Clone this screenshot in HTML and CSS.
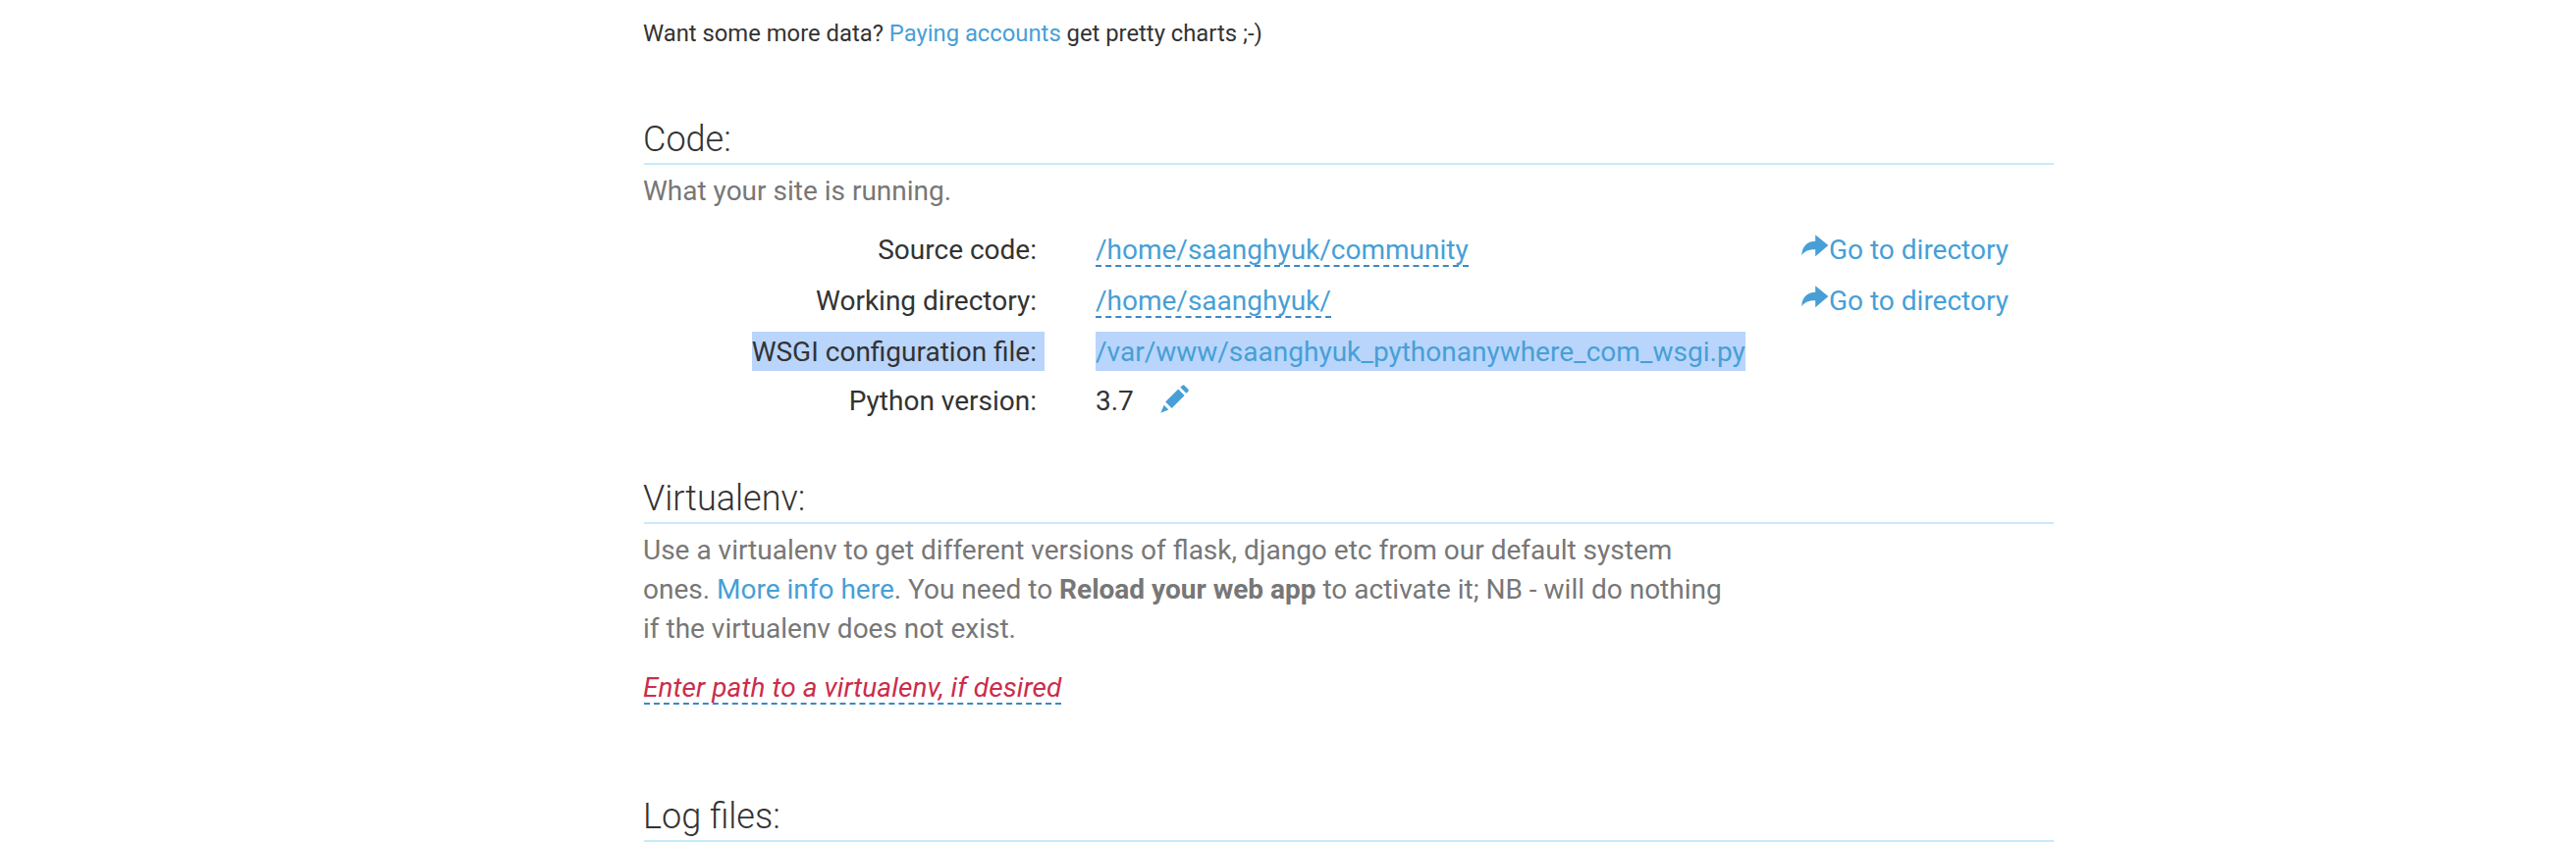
FILE: index.html
```html
<!DOCTYPE html>
<html lang="en">
<head>
<meta charset="utf-8">
<title>Web app configuration</title>
<link rel="stylesheet" href="styles.css">
</head>
<body>
<svg class="sprite" aria-hidden="true">
  <symbol id="share" viewBox="0 0 28 24"><path d="M14.2 0.2 27.4 11 14.2 22.3V15.2C8.5 15 3.2 16.5 0.2 21.2 0.6 12 6 7 14.2 6.8Z"/></symbol>
  <symbol id="pencil" viewBox="0 0 30 30"><path d="M5.2 17.6 18.2 4.6 24.6 11 11.6 24ZM20.3 2.7 22.2 0.9C23 0.1 23.9 0.1 24.7 0.9L28.2 4.4C29 5.2 29 6.1 28.2 6.9L26.4 8.8ZM3.7 20.7 8.4 25.6 0.3 28.8Z"/></symbol>
</svg>
<main class="page">
  <p class="teaser">Want some more data? <a href="#">Paying accounts</a> get pretty charts ;-)</p>

  <section class="section code">
    <h2>Code:</h2>
    <p class="help">What your site is running.</p>
    <div class="settings">
      <div class="row">
        <span class="label">Source code:</span>
        <span class="value"><a class="editable" href="#">/home/saanghyuk/community</a></span>
        <a class="goto" href="#"><svg class="share"><use href="#share"/></svg>Go to directory</a>
      </div>
      <div class="row">
        <span class="label">Working directory:</span>
        <span class="value"><a class="editable" href="#">/home/saanghyuk/</a></span>
        <a class="goto" href="#"><svg class="share"><use href="#share"/></svg>Go to directory</a>
      </div>
      <div class="row short">
        <span class="label"><span class="selected tail">WSGI configuration file:</span></span>
        <span class="value"><a class="selected" href="#">/var/www/saanghyuk_pythonanywhere_com_wsgi.py</a></span>
      </div>
      <div class="row short">
        <span class="label">Python version:</span>
        <span class="value">3.7 <a href="#"><svg class="pencil"><use href="#pencil"/></svg></a></span>
      </div>
    </div>
  </section>

  <section class="section virtualenv">
    <h2>Virtualenv:</h2>
    <p class="help">Use a virtualenv to get different versions of flask, django etc from our default system ones. <a href="#">More info here</a>. You need to <strong>Reload your web app</strong> to activate it; NB - will do nothing if the virtualenv does not exist.</p>
    <p class="path"><a class="editable empty" href="#">Enter path to a virtualenv, if desired</a></p>
  </section>

  <section class="section logs">
    <h2>Log files:</h2>
  </section>
</main>
</body>
</html>
```

FILE: styles.css
```css
* { box-sizing: border-box; }
html { overflow: hidden; }
body {
  margin: 0;
  background: #fff;
  color: #333;
  font: 28px/40px Roboto, "Liberation Sans", sans-serif;
}
p, h2 { margin: 0; }
a { color: #479fd6; text-decoration: none; }
.sprite { display: none; }
.page { width: 1436px; margin-left: 656px; padding-top: 17px; }
.teaser { margin-left: -1px; font-size: 23.8px; line-height: 34px; }
.section h2 {
  height: 46px;
  border-bottom: 2px solid #c6eafb;
  font-size: 36px;
  font-weight: 300;
  line-height: 40px;
  text-indent: -1px;
}
.code { margin-top: 71px; }
.help { width: 1120px; margin: 7px 0 0 -1px; color: #777; }
.settings { display: flex; flex-direction: column; margin-top: 19px; }
.row {
  display: grid;
  grid-template-columns: 400px 660px 1fr;
  column-gap: 60px;
  height: 52px;
  line-height: 42px;
}
.row.short { height: 50px; }
.label { text-align: right; }
.value { white-space: nowrap; }
.selected { display: inline-block; height: 40px; background: #b9d5fb; }
.tail { padding-right: 8px; margin-right: -8px; }
.editable {
  display: inline-block;
  height: 38px;
  border-bottom: 2px dashed #3b87c8;
}
.goto { display: flex; margin-left: -1px; white-space: nowrap; }
.share { flex: none; width: 28px; height: 24px; margin-top: 5px; fill: #479fd6; }
.pencil { width: 30px; height: 30px; margin-left: 20px; vertical-align: -4px; fill: #479fd6; }
.virtualenv { margin-top: 50px; }
.path { height: 40px; margin-top: 19px; line-height: 42px; }
.empty { color: #cb2d4b; font-style: italic; letter-spacing: 0.08px; text-indent: -1px; }
.logs { margin-top: 92px; }
```
